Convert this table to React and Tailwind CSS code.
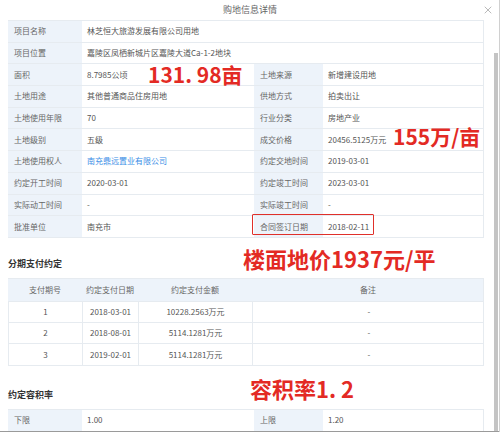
import React from "react";
import { X } from "lucide-react";

const info = [
  ["项目名称", "林芝恒大旅游发展有限公司用地"],
  ["项目位置", "嘉陵区凤栖新城片区嘉陵大道Ca-1-2地块"],
  ["面积", "8.7985公顷", "土地来源", "新增建设用地"],
  ["土地用途", "其他普通商品住房用地", "供地方式", "拍卖出让"],
  ["土地使用年限", "70", "行业分类", "房地产业"],
  ["土地级别", "五级", "成交价格", "20456.5125万元"],
  ["土地使用权人", "南充鼎远置业有限公司", "约定交地时间", "2019-03-01"],
  ["约定开工时间", "2020-03-01", "约定竣工时间", "2023-03-01"],
  ["实际动工时间", "-", "实际竣工时间", "-"],
  ["批准单位", "南充市", "合同签订日期", "2018-02-11"],
];

const payments = [
  ["1", "2018-03-01", "10228.2563万元", "-"],
  ["2", "2018-08-01", "5114.1281万元", "-"],
  ["3", "2019-02-01", "5114.1281万元", "-"],
];

const label = "bg-[#edf3fa] px-[6px] flex items-center text-[#666]";
const value = "px-[5px] flex items-center text-[#555]";

const InfoRow = ({ row, i }) => {
  if (row.length === 2) {
    return (
      <div className="grid grid-cols-[74px_402px] h-[21.7px] border-b border-[#e6ebf0]">
        <div className={label}>{row[0]}</div>
        <div className={value}>{row[1]}</div>
      </div>
    );
  }
  return (
    <div className="grid grid-cols-[74px_172px_69px_161px] h-[21.7px] border-b border-[#e6ebf0]">
      <div className={label}>{row[0]}</div>
      <div className={value + (i === 6 ? " !text-[#3a8ee6]" : "")}>{row[1]}</div>
      <div className={label + " relative"}>
        {row[2]}
        {i === 9 && (
          <div className="absolute left-[-2px] top-[-2px] w-[122px] h-[21px] border-[1.5px] border-[#e0302a] rounded-[1px]"></div>
        )}
      </div>
      <div className={value}>{row[3]}</div>
    </div>
  );
};

const Red = ({ className, children }) => (
  <div className={"absolute font-bold text-[#e32a24] leading-none whitespace-nowrap " + className}>
    {children}
  </div>
);

export default function App() {
  return (
    <div
      className="w-[500px] h-[432px] bg-white relative overflow-hidden flex flex-col text-[8px]"
      style={{ fontFamily: '"Noto Sans CJK SC", "Noto Sans", sans-serif' }}
    >
      {/* header */}
      <div className="h-[20px] flex items-center justify-center text-[9px] text-[#666] relative shrink-0">
        购地信息详情
        <X className="absolute right-[6px] top-[4px] text-[#8a8a8a]" size={12} strokeWidth={1.2} />
      </div>

      <div className="flex flex-1">
        <div className="w-[484px] pl-[8px] flex flex-col">
          <div className="border-t border-r border-[#e6ebf0]">
            {info.map((r, i) => (
              <InfoRow key={i} row={r} i={i} />
            ))}
          </div>

          {/* 分期支付约定 */}
          <div className="pt-[20px] pb-[8px] leading-[12px] text-[9px] font-bold text-[#333]">分期支付约定</div>
          <div className="border-t border-r border-[#e6ebf0] text-[#555]">
            <div className="grid grid-cols-[74px_56px_114px_232px] h-[23px] bg-[#edf3fa] text-[#666] border-b border-[#e6ebf0]">
              <div className="flex items-center justify-center">支付期号</div>
              <div className="flex items-center justify-center">约定支付日期</div>
              <div className="flex items-center justify-center">约定支付金额</div>
              <div className="flex items-center justify-center">备注</div>
            </div>
            {payments.map((p) => (
              <div key={p[0]} className="grid grid-cols-[74px_56px_114px_232px] h-[21.3px] border-b border-l border-[#e6ebf0]">
                <div className="flex items-center justify-center border-r border-[#e6ebf0]">{p[0]}</div>
                <div className="flex items-center justify-center border-r border-[#e6ebf0]">{p[1]}</div>
                <div className="flex items-center justify-center border-r border-[#e6ebf0]">{p[2]}</div>
                <div className="flex items-center justify-center">{p[3]}</div>
              </div>
            ))}
          </div>

          {/* 约定容积率 */}
          <div className="pt-[23px] pb-[8px] leading-[12px] text-[9px] font-bold text-[#333]">约定容积率</div>
          <div className="grid grid-cols-[74px_172px_69px_161px] h-[22px] border-t border-r border-[#e6ebf0]">
            <div className={label}>下限</div>
            <div className={value}>1.00</div>
            <div className={label}>上限</div>
            <div className={value}>1.20</div>
          </div>
        </div>

        {/* scrollbar */}
        <div className="flex-1 flex pt-[33px] pl-[10px]">
          <div className="w-[4px] bg-[#c4c4c4]"></div>
        </div>
      </div>

      <div className="h-[2px] bg-[#9a9a9a] shrink-0"></div>
      <div className="absolute right-0 top-0 bottom-0 w-[1px] bg-[#d0d0d0]"></div>

      {/* annotations */}
      <Red className="left-[148px] top-[64px] text-[21px]">131. 98亩</Red>
      <Red className="left-[393px] top-[126px] text-[21px]">155万/亩</Red>
      <Red className="left-[243px] top-[247px] text-[22px]">楼面地价1937元/平</Red>
      <Red className="left-[250px] top-[377px] text-[22px]">容积率1. 2</Red>
    </div>
  );
}
